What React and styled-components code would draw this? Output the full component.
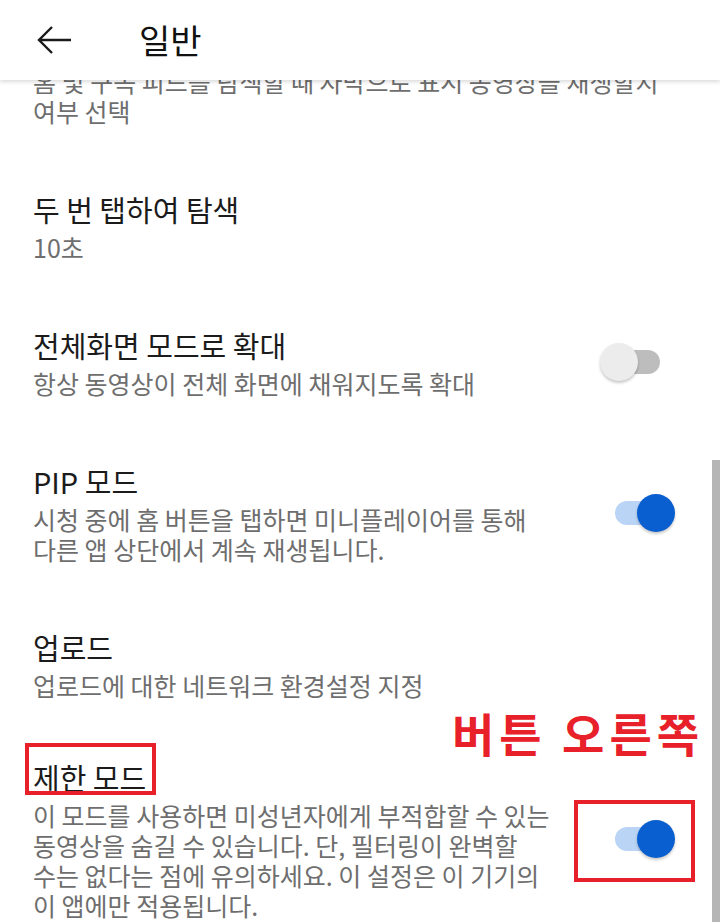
import styled, { createGlobalStyle } from "styled-components";

const GlobalStyle = createGlobalStyle`
	* {
		box-sizing: border-box;
	}
	body {
		margin: 0;
		background: #fff;
		font-family: "Noto Sans CJK KR", "Noto Sans", sans-serif;
	}
`;

const Page = styled.div`
	position: relative;
	width: 720px;
	height: 922px;
	overflow: hidden;
	background: #fff;
`;

// app bar floats over the scrolled list
const Header = styled.header`
	position: absolute;
	top: 0;
	left: 0;
	right: 0;
	z-index: 2;
	height: 80px;
	display: flex;
	align-items: center;
	gap: 67px;
	padding-left: 37px;
	background: #fff;
	box-shadow: 0 2px 4px rgba(0, 0, 0, 0.14);
`;

const BackButton = styled.button`
	display: flex;
	align-items: center;
	padding: 0;
	border: none;
	background: none;
	color: #1a1a1a;
	cursor: pointer;
`;

const HeaderTitle = styled.h1`
	margin: 0;
	font-size: 34px;
	font-weight: 400;
	line-height: 40px;
	color: #111;
`;

const List = styled.ul`
	margin: 0;
	padding: 0;
	list-style: none;
`;

const Row = styled.li`
	display: flex;
	align-items: center;
	padding: ${(p) => p.$top}px 45px 32px 33px;
`;

const Text = styled.div`
	flex: 1;
	min-width: 0;
`;

const Title = styled.div`
	margin-bottom: 4px;
	font-size: 29px;
	line-height: 38px;
	color: #1b1b1b;
	white-space: nowrap;
`;

const Desc = styled.div`
	font-size: 25px;
	line-height: 30px;
	color: #6e6e6e;
	white-space: pre-line;
`;

const Switch = styled.div`
	position: relative;
	flex-shrink: 0;
	display: flex;
	align-items: center;
	justify-content: ${(p) => (p.$on ? "flex-end" : "flex-start")};
	width: 75px;
	height: 40px;
	margin-left: 20px;

	&::before {
		content: "";
		position: absolute;
		left: 15px;
		top: 8px;
		width: 45px;
		height: 24px;
		border-radius: 12px;
		background: ${(p) => (p.$on ? "#b9d4f5" : "#bdbdbd")};
	}
`;

const Knob = styled.div`
	position: relative;
	width: 38px;
	height: 38px;
	border-radius: 50%;
	background: ${(p) => (p.$on ? "#0a5fd0" : "#ececec")};
	box-shadow: 0 2px 3px rgba(0, 0, 0, 0.22);
`;

const Scrollbar = styled.div`
	position: absolute;
	right: 0;
	top: 460px;
	bottom: 0;
	width: 8px;
	background: #b5b5b5;
`;

const MarkBox = styled.div`
	position: absolute;
	border: 4px solid #e8202a;
`;

const Callout = styled.div`
	position: absolute;
	left: 452px;
	top: 707px;
	font-size: 46px;
	font-weight: 700;
	line-height: 50px;
	letter-spacing: 5px;
	color: #e8202a;
	white-space: nowrap;
`;

const ArrowIcon = () => (
	<svg width="35" height="28" viewBox="0 0 35 28" fill="none">
		<path
			d="M34 14H2M15 1L2 14l13 13"
			stroke="currentColor"
			strokeWidth="2.4"
		/>
	</svg>
);

const Toggle = ({ on }) => (
	<Switch $on={on}>
		<Knob $on={on} />
	</Switch>
);

const settings = [
	{
		desc: "홈 및 구독 피드를 탐색할 때 자막으로 표시 동영상을 재생할지\n여부 선택",
		top: 66,
	},
	{ title: "두 번 탭하여 탐색", desc: "10초" },
	{
		title: "전체화면 모드로 확대",
		desc: "항상 동영상이 전체 화면에 채워지도록 확대",
		toggle: false,
	},
	{
		title: "PIP 모드",
		desc: "시청 중에 홈 버튼을 탭하면 미니플레이어를 통해\n다른 앱 상단에서 계속 재생됩니다.",
		toggle: true,
	},
	{ title: "업로드", desc: "업로드에 대한 네트워크 환경설정 지정" },
	{
		title: "제한 모드",
		desc: "이 모드를 사용하면 미성년자에게 부적합할 수 있는\n동영상을 숨길 수 있습니다. 단, 필터링이 완벽할\n수는 없다는 점에 유의하세요. 이 설정은 이 기기의\n이 앱에만 적용됩니다.",
		toggle: true,
		top: 26,
	},
];

const App = () => {
	return (
		<>
			<GlobalStyle />
			<Page>
				<Header>
					<BackButton>
						<ArrowIcon />
					</BackButton>
					<HeaderTitle>일반</HeaderTitle>
				</Header>
				<List>
					{settings.map((item) => (
						<Row key={item.desc} $top={item.top ?? 32}>
							<Text>
								{item.title && <Title>{item.title}</Title>}
								<Desc>{item.desc}</Desc>
							</Text>
							{item.toggle !== undefined && <Toggle on={item.toggle} />}
						</Row>
					))}
				</List>
				<Scrollbar />
				<Callout>버튼 오른쪽</Callout>
				<MarkBox style={{ left: 25, top: 743, width: 131, height: 52 }} />
				<MarkBox style={{ left: 574, top: 800, width: 121, height: 82 }} />
			</Page>
		</>
	);
};

export default App;
